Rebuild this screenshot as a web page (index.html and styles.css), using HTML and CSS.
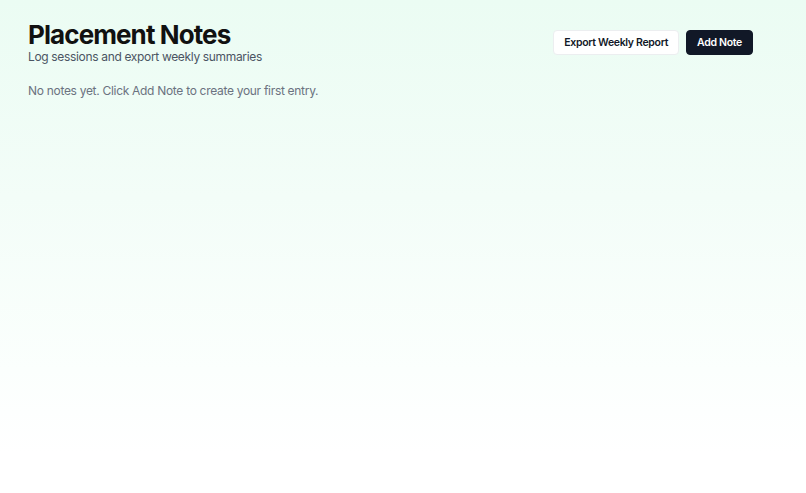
FILE: index.html
```html
<!DOCTYPE html>
<html lang="en">
<head>
<meta charset="utf-8">
<title>Placement Notes</title>
<link rel="stylesheet" href="styles.css">
</head>
<body>
<main class="page">
  <header class="header">
    <div class="titles">
      <h1 class="title">Placement Notes</h1>
      <p class="subtitle">Log sessions and export weekly summaries</p>
    </div>
    <div class="actions">
      <button class="btn btn-outline" type="button">Export Weekly Report</button>
      <button class="btn btn-dark" type="button">Add Note</button>
    </div>
  </header>
  <p class="empty">No notes yet. Click Add Note to create your first entry.</p>
</main>
</body>
</html>
```

FILE: styles.css
```css
html, body {
  margin: 0;
  padding: 0;
  height: 100%;
}
body {
  font-family: Inter, "Noto Sans", sans-serif;
  background: linear-gradient(180deg, #ebfcf3 0%, #f3fdf8 40%, #fbfffd 75%, #ffffff 92%);
  color: #111827;
  min-height: 100vh;
}
.page {
  padding: 20px 53px 0 28px;
}
.header {
  display: flex;
  justify-content: space-between;
  align-items: flex-start;
}
.title {
  margin: 0;
  font-size: 26px;
  font-weight: 700;
  letter-spacing: -0.035em;
  line-height: 29px;
  color: #111;
}
.subtitle {
  margin: 0;
  font-size: 12px;
  letter-spacing: -0.028em;
  line-height: 16px;
  color: #4b5563;
}
.actions {
  display: flex;
  gap: 7px;
  margin-top: 10px;
}
.btn {
  font-family: Inter, "Noto Sans", sans-serif;
  font-size: 10.5px;
  font-weight: 600;
  letter-spacing: -0.03em;
  height: 25px;
  padding: 0 10px;
  border-radius: 4px;
  cursor: pointer;
}
.btn-outline {
  background: #ffffff;
  color: #111827;
  border: 1px solid #eceef0;
}
.btn-dark {
  background: #111827;
  color: #ffffff;
  border: 1px solid #111827;
}
.empty {
  margin: 18px 0 0;
  font-size: 12px;
  letter-spacing: -0.025em;
  line-height: 16px;
  color: #6b7280;
}
```
